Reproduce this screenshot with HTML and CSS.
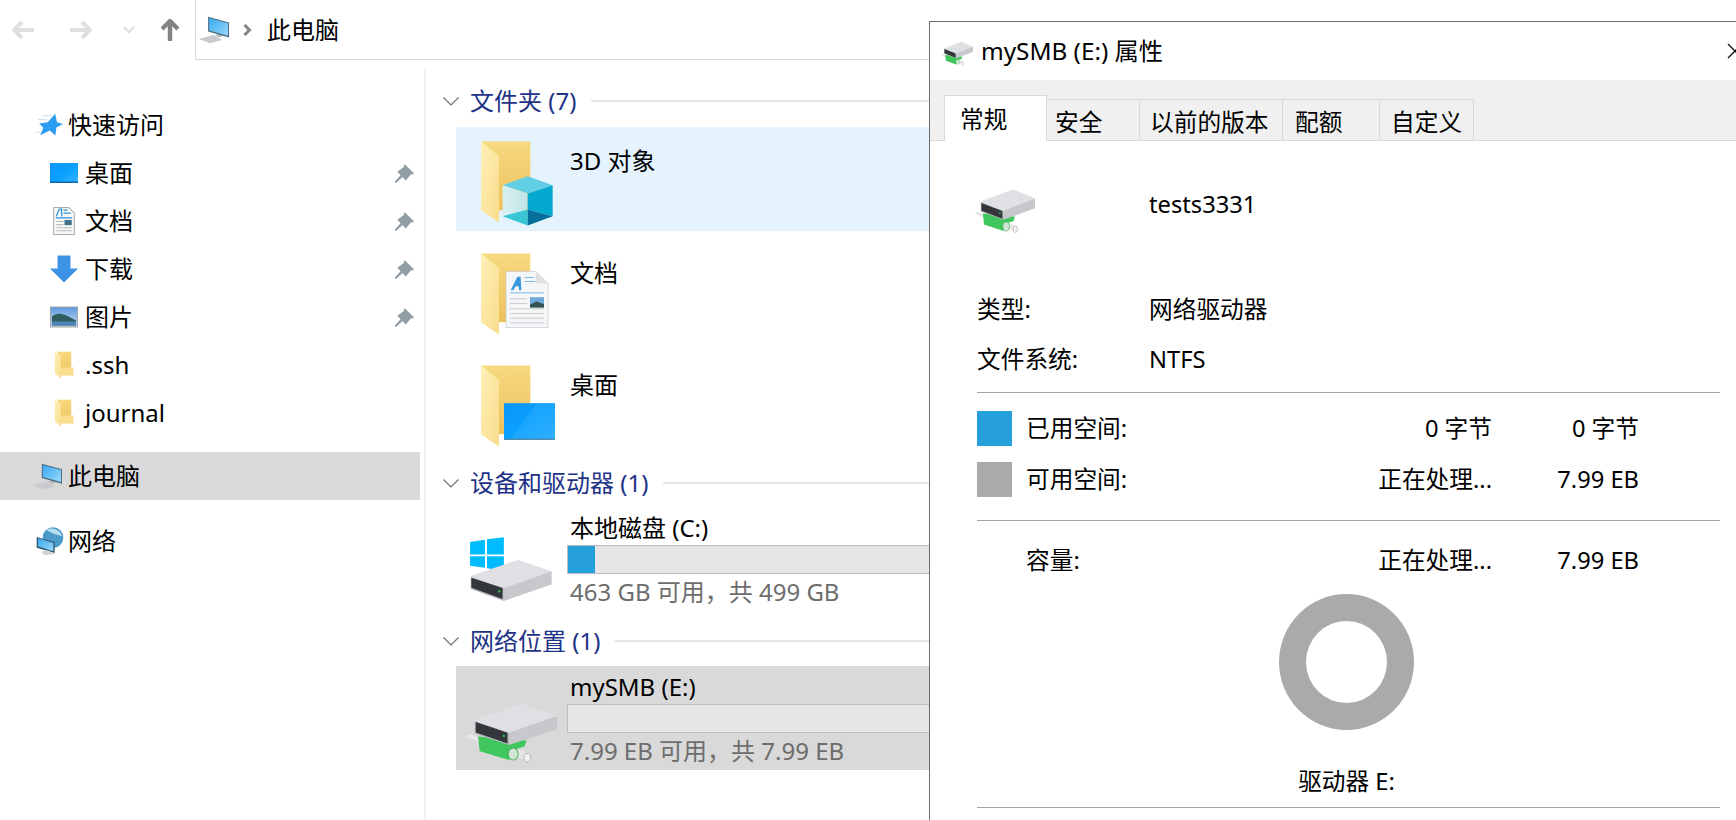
FILE: index.html
```html
<!DOCTYPE html>
<html lang="zh-CN">
<head>
    <meta charset="UTF-8">
    <title>此电脑</title>
    <link rel="stylesheet" href="styles.css">
</head>
<body>
    <!-- shared icons -->
    <svg class="defs" aria-hidden="true">
        <defs>
            <linearGradient id="gFolderBack" x1="0" y1="0" x2="0" y2="1"><stop offset="0" stop-color="#f7d97f"/><stop offset="1" stop-color="#eec15c"/></linearGradient>
            <linearGradient id="gFolderFlap" x1="0" y1="0" x2="1" y2="1"><stop offset="0" stop-color="#fff0b8"/><stop offset="1" stop-color="#f9dc8c"/></linearGradient>
            <linearGradient id="gScreen" x1="0" y1="0" x2="1" y2="1"><stop offset="0" stop-color="#0a95f7"/><stop offset="0.55" stop-color="#0ba2ff"/><stop offset="1" stop-color="#3cb4fb"/></linearGradient>
            <linearGradient id="gMonitor" x1="0" y1="0" x2="1" y2="1"><stop offset="0" stop-color="#37a7ee"/><stop offset="1" stop-color="#9adafb"/></linearGradient>
            <linearGradient id="gCubeL" x1="0" y1="0" x2="1" y2="0"><stop offset="0" stop-color="#d9f1f2"/><stop offset="1" stop-color="#bfe3e6"/></linearGradient>
            <linearGradient id="gSky" x1="0" y1="0" x2="0" y2="1"><stop offset="0" stop-color="#5d9ae0"/><stop offset="1" stop-color="#c5dcef"/></linearGradient>

            <symbol id="folder" viewBox="150 180 240 260">
                <rect x="153" y="184" width="148" height="206" fill="url(#gFolderBack)"/>
                <path d="M153 183 L207 228 V427 L153 390 Z" fill="url(#gFolderFlap)"/>
            </symbol>
            <symbol id="cube" viewBox="150 180 240 260">
                <path d="M218 315 L293 288 L368 315 L293 340 Z" fill="#63cfe6"/>
                <path d="M218 315 L293 340 V388 L218 408 Z" fill="url(#gCubeL)"/>
                <path d="M368 315 L293 340 V388 L368 408 Z" fill="#05a9cf"/>
                <path d="M218 408 L293 388 V436 Z" fill="#36c6d6"/>
                <path d="M368 408 L293 388 V436 Z" fill="#056f9c"/>
            </symbol>
            <symbol id="docOverlay" viewBox="150 180 240 260">
                <path d="M228 238 H318 L354 274 V406 H228 Z" fill="#f5f6f7" stroke="#c4c6c8" stroke-width="2"/>
                <path d="M318 238 V274 H354 Z" fill="#dfe1e3"/>
                <path d="M242 294 L262 254 H272 L274 294 H267 L266 282 H257 L250 294 Z" fill="#3a98dc"/>
                <path d="M284 256 H312 M284 268 H316 M240 302 H342" stroke="#7db9e6" stroke-width="3"/>
                <path d="M240 320 H292 M240 334 H292 M240 350 H342 M240 364 H342 M240 378 H342 M240 392 H342" stroke="#c9cbce" stroke-width="3"/>
                <rect x="300" y="315" width="42" height="31" fill="#6fa9d8"/>
                <path d="M300 338 L320 328 L342 336 V346 H300 Z" fill="#33524f"/>
            </symbol>
            <symbol id="screenOverlay" viewBox="150 180 240 260">
                <rect x="222" y="297" width="153" height="110" fill="url(#gScreen)"/>
                <path d="M245 403 L320 298 H375 V403 Z" fill="#28abff" opacity="0.6"/>
                <rect x="222" y="403" width="153" height="4" fill="#4d86a8"/>
            </symbol>
            <symbol id="localDrive" viewBox="105 225 280 205">
                <path d="M120 246 L165 239 V284 H120 Z M171 238 L222 232 V284 H171 Z M120 289 H165 V324 L120 318 Z M171 289 H222 V333 L171 325 Z" fill="#00bcff"/>
                <path d="M126 352 L265 304 L362 337 L222 385 Z" fill="#dfe0e3" stroke="#dfe0e3" stroke-width="8" stroke-linejoin="round"/>
                <path d="M222 385 L366 335 V374 L222 424 Z" fill="#c7c8cb"/>
                <path d="M122 352 L222 385 V424 L122 388 Z" fill="#b9babc"/>
                <path d="M124 354 L218 385 V418 L124 384 Z" fill="#33363a"/>
                <circle cx="208" cy="395" r="3.5" fill="#25d63c"/>
            </symbol>
            <symbol id="netDrive" viewBox="100 725 290 185" preserveAspectRatio="none">
                <path d="M107 828 L122 822 L300 878 V900 L280 896 Z" fill="#e6e7e6"/>
                <path d="M145 828 L290 840 L284 858 L250 868 L238 898 L150 872 Z" fill="#3fc65c"/>
                <ellipse cx="250" cy="880" rx="15" ry="18" fill="#cfe5d2" stroke="#4fae63" stroke-width="3"/>
                <ellipse cx="292" cy="891" rx="10" ry="13" fill="#f0f0f0" stroke="#b5b5b5" stroke-width="3"/>
                <path d="M139 782 L280 735 L377 769 L237 817 Z" fill="#dfe0e3" stroke="#dfe0e3" stroke-width="8" stroke-linejoin="round"/>
                <path d="M237 817 L381 767 V806 L237 853 Z" fill="#c7c8cb"/>
                <path d="M135 782 L237 817 V853 L135 820 Z" fill="#b9babc"/>
                <path d="M138 785 L233 817 V849 L138 816 Z" fill="#33363a"/>
                <circle cx="222" cy="826" r="3.5" fill="#25d63c"/>
            </symbol>
            <symbol id="computer" viewBox="595 45 95 85" preserveAspectRatio="none">
                <path d="M597 115 L640 103 L667 118 L630 128 Z" fill="#c8cacd"/>
                <path d="M655 98 L672 103 L660 110 L645 105 Z" fill="#b9babc"/>
                <path d="M625 47 L687 65 V110 L625 92 Z" fill="#4c6a80"/>
                <path d="M628 51 L684 67 V105 L628 89 Z" fill="url(#gMonitor)"/>
            </symbol>
            <symbol id="pin" viewBox="1180 485 64 62">
                <path d="M1212 487 L1242 517 L1231 519 L1216 537 L1206 527 L1186 545 L1182 541 L1200 521 L1190 511 L1209 497 Z" fill="#929ea6"/>
            </symbol>
            <symbol id="smallFolder" viewBox="158 214 58 82">
                <rect x="168" y="216" width="40" height="68" fill="url(#gFolderBack)"/>
                <rect x="172" y="262" width="43" height="24" fill="#f9dc8c"/>
                <path d="M160 217 L178 228 V295 L160 280 Z" fill="url(#gFolderFlap)"/>
            </symbol>
        </defs>
    </svg>

    <div class="explorer">
        <header class="toolbar">
            <nav class="nav">
                <svg class="nav-back" viewBox="0 0 22 18"><path d="M10 1 L2 9 L10 17 M2 9 H22" fill="none" stroke="#e0e0e0" stroke-width="4"/></svg>
                <svg class="nav-forward" viewBox="0 0 22 18"><path d="M12 1 L20 9 L12 17 M20 9 H0" fill="none" stroke="#e0e0e0" stroke-width="4"/></svg>
                <svg class="nav-down" viewBox="0 0 12 8"><path d="M1 1 L6 6 L11 1" fill="none" stroke="#e0e0e0" stroke-width="2.4"/></svg>
                <svg class="nav-up" viewBox="0 0 18 22"><path d="M1 10 L9 2 L17 10 M9 2 V22" fill="none" stroke="#838383" stroke-width="4.4"/></svg>
            </nav>
            <div class="address">
                <svg class="address-icon"><use href="#computer"/></svg>
                <svg class="address-sep" viewBox="0 0 9 12"><path d="M1.5 1 L6.5 6 L1.5 11" fill="none" stroke="#838383" stroke-width="3"/></svg>
                <span>此电脑</span>
            </div>
        </header>

        <div class="panes">
            <aside class="sidebar">
                <div class="tree-row tree-root">
                    <svg class="tree-icon" viewBox="105 338 88 74">
                        <path d="M165 340 L171 366 L190 372 L169 383 L166 408 L148 392 L118 407 L128 384 L115 370 L142 366 Z" fill="#2c9df0"/>
                        <path d="M125 346 H155 M112 358 H140 M105 398 H118" stroke="#bfe0f8" stroke-width="3"/>
                    </svg>
                    <span>快速访问</span>
                </div>
                <div class="tree-row">
                    <svg class="tree-icon" viewBox="0 0 28 20"><rect width="28" height="20" fill="url(#gScreen)"/><rect y="18.5" width="28" height="1.5" fill="#0a66ad"/></svg>
                    <span>桌面</span>
                    <svg class="pin"><use href="#pin"/></svg>
                </div>
                <div class="tree-row">
                    <svg class="tree-icon" viewBox="0 0 21 27">
                        <path d="M.5.5 H15 L20.5 6 V26.5 H.5 Z" fill="#f8f8f8" stroke="#a9abad"/>
                        <path d="M3 9 L6 2 H8 L8.5 9 M10 3 H14 M10 6 H17 M2.500 10.500 H18.500" fill="none" stroke="#2c90dc" stroke-width="1.200"/>
                        <path d="M3 14 H10 M3 17 H10 M3 20 H18 M3 23 H18" stroke="#b9bbbd"/>
                        <rect x="11" y="12.500" width="7" height="5" fill="#3f7189"/>
                    </svg>
                    <span>文档</span>
                    <svg class="pin"><use href="#pin"/></svg>
                </div>
                <div class="tree-row">
                    <svg class="tree-icon" viewBox="0 0 26 25"><path d="M7 0 H19 V12 H26 L13 25 L0 12 H7 Z" fill="#3c93e6"/></svg>
                    <span>下载</span>
                    <svg class="pin"><use href="#pin"/></svg>
                </div>
                <div class="tree-row">
                    <svg class="tree-icon" viewBox="0 0 28 21">
                        <rect x=".5" y=".5" width="27" height="20" fill="url(#gSky)" stroke="#a5a5a5"/>
                        <path d="M2 10 C8 5 14 7 26 14 V19 H2 Z" fill="#2f5c5c"/>
                        <rect x="2" y="15" width="24" height="4" fill="#4a84b8"/>
                    </svg>
                    <span>图片</span>
                    <svg class="pin"><use href="#pin"/></svg>
                </div>
                <div class="tree-row">
                    <svg class="tree-icon"><use href="#smallFolder"/></svg>
                    <span>.ssh</span>
                </div>
                <div class="tree-row">
                    <svg class="tree-icon"><use href="#smallFolder"/></svg>
                    <span>journal</span>
                </div>
                <div class="tree-row tree-root tree-selected">
                    <svg class="tree-icon tree-computer"><use href="#computer"/></svg>
                    <span>此电脑</span>
                </div>
                <div class="tree-row tree-root tree-network">
                    <svg class="tree-icon" viewBox="105 738 82 84">
                        <circle cx="155" cy="770" r="31" fill="#4b9bc9"/>
                        <path d="M135 748 C150 735 175 745 183 765 L160 760 Z" fill="#b5dcef"/>
                        <path d="M106 768 L160 784 V816 L106 800 Z" fill="#34586f"/>
                        <path d="M110 772 L156 786 V811 L110 796 Z" fill="url(#gMonitor)"/>
                        <path d="M118 812 L140 808 L160 820 L130 822 Z" fill="#cfd1d3"/>
                    </svg>
                    <span>网络</span>
                </div>
            </aside>

            <main class="content">
                <div class="group-head group-first">
                    <svg class="group-chevron" viewBox="0 0 16 9"><path d="M.5.5 L8 8 L15.500.5" fill="none" stroke="#6f6f6f" stroke-width="1.200"/></svg>
                    <span>文件夹 (7)</span>
                    <i class="group-line"></i>
                </div>
                <div class="tile tile-hover">
                    <span class="tile-art"><svg class="art"><use href="#folder"/></svg><svg class="art art-over"><use href="#cube"/></svg></span>
                    <div class="tile-text tile-text-plain">3D 对象</div>
                </div>
                <div class="tile">
                    <span class="tile-art"><svg class="art"><use href="#folder"/></svg><svg class="art art-over"><use href="#docOverlay"/></svg></span>
                    <div class="tile-text tile-text-plain">文档</div>
                </div>
                <div class="tile">
                    <span class="tile-art"><svg class="art"><use href="#folder"/></svg><svg class="art art-over"><use href="#screenOverlay"/></svg></span>
                    <div class="tile-text tile-text-plain">桌面</div>
                </div>

                <div class="group-head group-drives">
                    <svg class="group-chevron" viewBox="0 0 16 9"><path d="M.5.5 L8 8 L15.500.5" fill="none" stroke="#6f6f6f" stroke-width="1.200"/></svg>
                    <span>设备和驱动器 (1)</span>
                    <i class="group-line"></i>
                </div>
                <div class="tile tile-drive">
                    <svg class="drive-art local-art"><use href="#localDrive"/></svg>
                    <div class="tile-text">
                        <div class="drive-name">本地磁盘 (C:)</div>
                        <div class="meter"><div class="meter-fill" style="width: 27px"></div></div>
                        <div class="drive-free">463 GB 可用，共 499 GB</div>
                    </div>
                </div>

                <div class="group-head group-net">
                    <svg class="group-chevron" viewBox="0 0 16 9"><path d="M.5.5 L8 8 L15.500.5" fill="none" stroke="#6f6f6f" stroke-width="1.200"/></svg>
                    <span>网络位置 (1)</span>
                    <i class="group-line"></i>
                </div>
                <div class="tile tile-drive tile-selected">
                    <svg class="drive-art net-art"><use href="#netDrive"/></svg>
                    <div class="tile-text">
                        <div class="drive-name">mySMB (E:)</div>
                        <div class="meter"></div>
                        <div class="drive-free">7.99 EB 可用，共 7.99 EB</div>
                    </div>
                </div>
            </main>
        </div>
    </div>

    <section class="dialog">
        <div class="dialog-title">
            <svg class="title-icon"><use href="#netDrive"/></svg>
            <span>mySMB (E:) 属性</span>
            <svg class="dialog-close" viewBox="0 0 16 16"><path d="M1 1 L15 15 M15 1 L1 15" stroke="#111" stroke-width="1.300"/></svg>
        </div>
        <div class="tabs">
            <div class="tab tab-active">常规</div>
            <div class="tab tab-security">安全</div>
            <div class="tab tab-versions">以前的版本</div>
            <div class="tab tab-quota">配额</div>
            <div class="tab tab-custom">自定义</div>
        </div>
        <div class="dialog-body">
            <div class="info-head">
                <svg class="info-icon"><use href="#netDrive"/></svg>
                <span>tests3331</span>
            </div>
            <div class="info-row info-type"><span>类型:</span><span>网络驱动器</span></div>
            <div class="info-row info-fs"><span>文件系统:</span><span>NTFS</span></div>
            <hr class="rule rule-first">
            <div class="space">
                <i class="swatch swatch-used"></i><span>已用空间:</span><span class="num">0 字节</span><span class="num">0 字节</span>
                <i class="swatch swatch-free"></i><span>可用空间:</span><span class="num">正在处理...</span><span class="num">7.99 EB</span>
            </div>
            <hr class="rule rule-second">
            <div class="space space-total">
                <i></i><span>容量:</span><span class="num">正在处理...</span><span class="num">7.99 EB</span>
            </div>
            <div class="donut-wrap"><div class="donut"></div></div>
            <div class="drive-label">驱动器 E:</div>
            <hr class="rule rule-last">
        </div>
    </section>
</body>
</html>
```

FILE: styles.css
```css
html, body { margin: 0; height: 100%; overflow: hidden; background: #fff; }
body { font-family: "Noto Sans", "Noto Sans CJK SC", sans-serif; font-size: 24px; color: #000; position: relative; }
.defs { position: absolute; width: 0; height: 0; }
span, div { line-height: 30px; white-space: nowrap; }

/* toolbar */
.toolbar { display: flex; height: 60px; }
.nav { width: 195px; display: flex; align-items: center; flex-shrink: 0; }
.nav-back { width: 22px; height: 18px; margin-left: 12px; }
.nav-forward { width: 22px; height: 18px; margin-left: 36px; }
.nav-down { width: 12px; height: 8px; margin-left: 31px; }
.nav-up { width: 18px; height: 22px; margin-left: 26px; }
.address { flex: 1; display: flex; align-items: center; border-left: 1px solid #d9d9d9; border-bottom: 1px solid #d9d9d9; }
.address-icon { width: 32px; height: 28px; margin-left: 2px; }
.address-sep { width: 9px; height: 12px; margin-left: 13px; margin-right: 15px; }

/* left tree */
.panes { display: flex; }
.sidebar { width: 426px; height: 752px; box-sizing: border-box; padding-top: 33px; border-right: 2px solid #f0f0f0; margin-top: 8px; flex-shrink: 0; margin-right: 30px; }
.tree-row { display: flex; align-items: center; height: 48px; padding-left: 50px; margin-right: 4px; }
.tree-row > span { margin-left: 7px; }
.tree-row .tree-icon { width: 28px; height: 28px; }
.tree-root { padding-left: 36px; }
.tree-root > span { margin-left: 4px; }
.tree-selected { background: #d9d9d9; margin-top: 15px; padding-left: 32px; }
.tree-row .tree-computer { width: 31px; height: 27px; }
.tree-selected > span { margin-left: 5px; }
.tree-network { margin-top: 17px; }
.pin { width: 21px; height: 21px; margin-left: auto; margin-right: 5px; }

/* content tiles */
.content { width: 480px; }
.group-head { display: flex; align-items: center; height: 30px; color: #1e3287; margin-left: -13px; }
.group-first { margin-top: 26px; margin-bottom: 11px; }
.group-drives { margin-top: 13px; margin-bottom: 9px; }
.group-net { margin-top: 15px; margin-bottom: 10px; }
.group-head span { margin-left: 11px; }
.group-chevron { width: 16px; height: 9px; }
.group-line { flex: 1; height: 2px; background: #e5e5e5; margin-left: 15px; }
.tile { height: 104px; display: flex; margin-bottom: 8px; }
.tile-hover { background: #e5f3ff; }
.tile-selected { background: #d9d9d9; margin-bottom: 0; }
.tile-art { position: relative; width: 80px; height: 87px; margin: 13px 0 0 24px; flex-shrink: 0; }
.art { width: 80px; height: 87px; display: block; }
.art-over { position: absolute; left: 0; top: 0; }
.tile-text { margin-left: 10px; flex: 1; padding-top: 6px; }
.tile-text-plain { padding-top: 19px; }
.drive-art { flex-shrink: 0; }
.local-art { width: 93px; height: 68px; margin: 28px 0 0 9px; }
.net-art { width: 97px; height: 62px; margin: 36px 0 0 7px; }
.tile-drive .tile-text { margin-left: 0; }
.local-art + .tile-text { margin-left: 9px; }
.net-art + .tile-text { margin-left: 7px; }
.drive-name { height: 32px; padding-left: 3px; }
.meter { height: 29px; box-sizing: border-box; background: #e6e6e6; border: 1px solid #bcbcbc; }
.meter-fill { height: 100%; background: #26a0da; }
.drive-free { color: #6d6d6d; margin-top: 3px; padding-left: 3px; }

/* properties window */
.dialog { position: absolute; left: 929px; top: 21px; width: 830px; height: 799px; box-sizing: border-box; background: #fff; border-top: 1px solid #6b6b6b; border-left: 1px solid #6b6b6b; }
.dialog-title { display: flex; align-items: center; height: 58px; padding: 0 16px 0 10px; font-size: 24.3px; }
.title-icon { width: 34px; height: 25px; margin-right: 7px; margin-top: 5px; }
.dialog-close { width: 16px; height: 16px; margin-left: auto; }
.tabs { display: flex; align-items: flex-end; height: 61px; box-sizing: border-box; padding-left: 14px; background: #f0f0f0; border-bottom: 1px solid #d9d9d9; font-size: 23.7px; }
.tab { height: 41px; box-sizing: border-box; padding-top: 7px; border: 1px solid #d9d9d9; border-left: 0; border-bottom: 0; }
.tab-active { width: 103px; height: 46px; padding-left: 15px; padding-top: 8px; background: #fff; border-left: 1px solid #d9d9d9; margin-bottom: -1px; }
.tab-security { width: 93px; padding-left: 8px; }
.tab-versions { width: 143px; padding-left: 10px; }
.tab-quota { width: 97px; padding-left: 12px; }
.tab-custom { width: 94px; padding-left: 11px; }
.dialog-body { margin-left: 14px; height: 679px; box-sizing: border-box; padding: 49px 39px 0 33px; background: #fff; font-size: 23.7px; }
.info-head { display: flex; height: 42px; }
.info-icon { width: 64px; height: 46px; margin: -2px 112px 0 -4px; }
.info-head span { margin-top: -1px; }
.info-row { display: grid; grid-template-columns: 172px 1fr; }
.info-type { margin-top: 62px; }
.info-fs { margin-top: 20px; }
.rule { border: 0; height: 1px; background: #a5a5a5; margin: 0; }
.rule-first { margin-top: 18px; }
.rule-second { margin-top: 23px; }
.rule-last { margin-top: 11px; }
.space { display: grid; grid-template-columns: 49px 1fr 150px 147px; width: 662px; row-gap: 16px; align-items: center; margin-top: 18px; }
.space > span { margin-bottom: 2px; }
.space-total { margin-top: 24px; }
.space-total > span { margin-bottom: 0; }
.swatch { height: 35px; width: 35px; display: block; }
.swatch-used { background: #26a0da; }
.swatch-free { background: #aaaaaa; }
.num { text-align: right; }
.donut-wrap { display: flex; justify-content: center; margin-top: 19px; width: 739px; }
.donut { width: 135px; height: 136px; box-sizing: border-box; border: 27px solid #aaaaaa; border-radius: 50%; }
.drive-label { text-align: center; width: 739px; margin-top: 36px; }
```
